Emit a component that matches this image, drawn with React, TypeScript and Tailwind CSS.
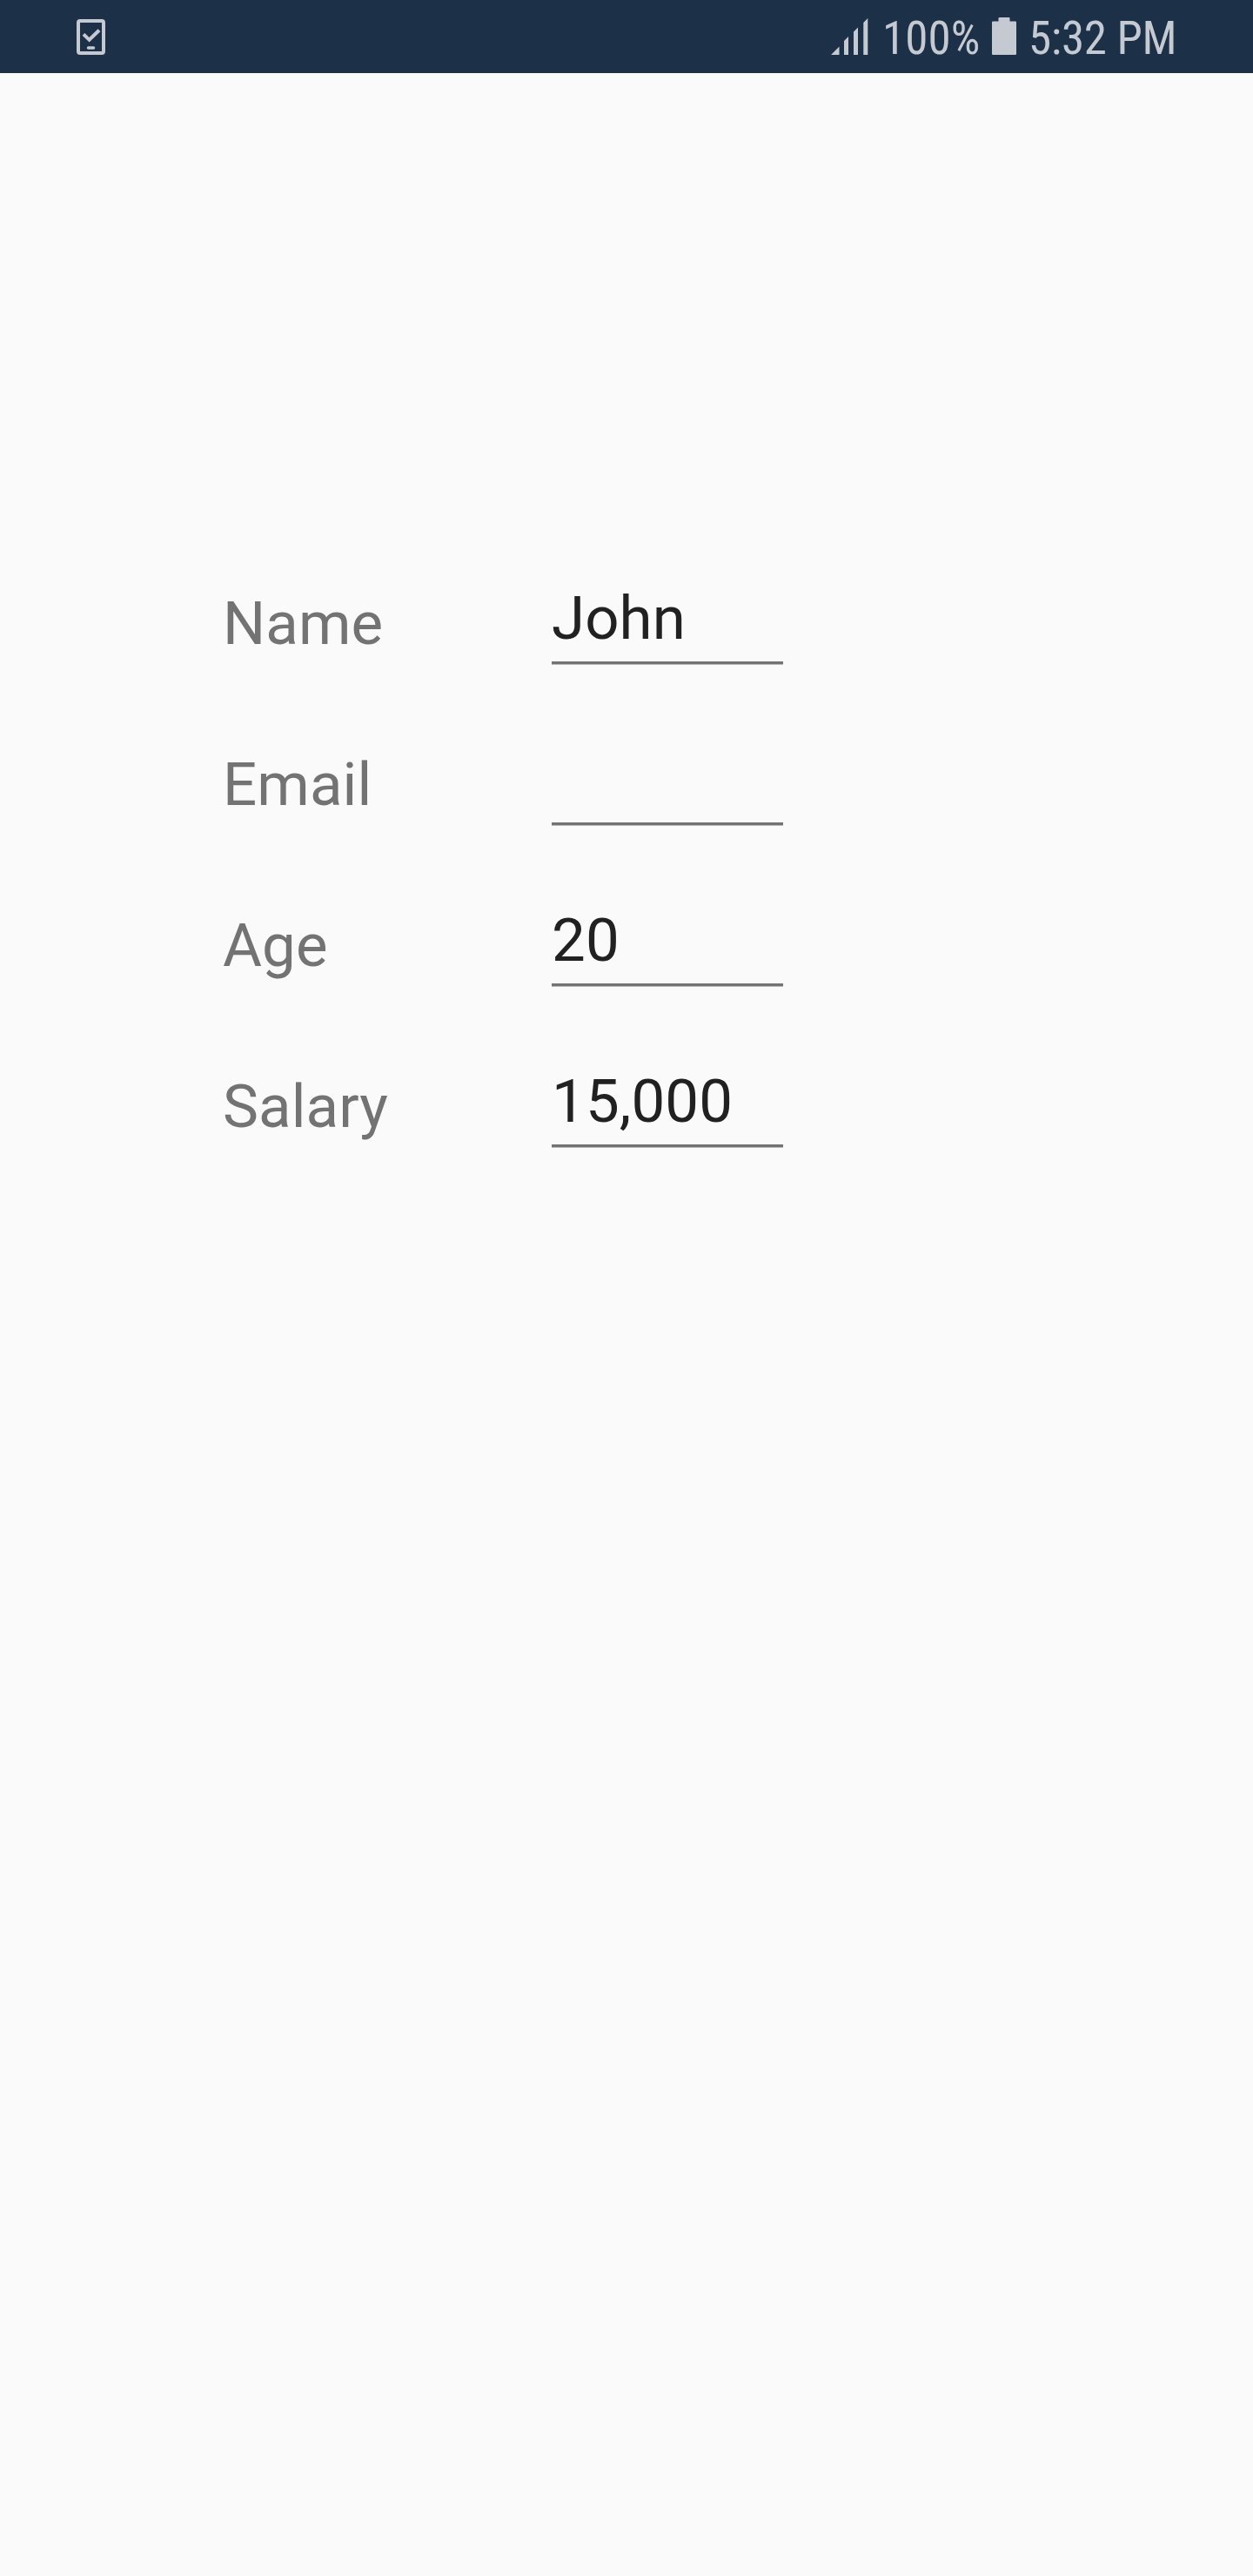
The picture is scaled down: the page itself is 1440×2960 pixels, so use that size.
function Row({ label, value }: { label: string; value: string }) {
  return (
    <div className="flex h-[185px]">
      <div className="w-[378px] pt-4 text-[69px] leading-[82px] tracking-[0.1px] text-[#737373]">{label}</div>
      <div className="h-[103px] w-[266px] border-b-[3px] border-[#737373] pt-2.5 text-[69px] leading-[82px] tracking-[0.1px] text-[#212121] shadow-[0_1px_0_#b8b8b8]">
        {value}
      </div>
    </div>
  );
}

function StatusBar() {
  return (
    <header className="flex h-[84px] items-start bg-[#1c3148] pl-[88px] pt-5 text-[#c5cad2]">
      <svg className="mt-0.5 h-[42px] w-[33px]" viewBox="0 0 33 42" fill="none" stroke="currentColor" strokeWidth="4">
        <rect x="2" y="2" width="29" height="37" rx="2" />
        <path d="M8 17.3l6.600 6.500L26 12.800" />
        <path d="M13.500 33h6" strokeWidth="3.500" strokeLinecap="round" />
      </svg>
      <svg className="ml-[834px] mt-px h-[42px] w-[43px]" viewBox="0 0 43 42" fill="currentColor">
        <path d="M0 42l9.500-9.500v9.500zM15 26l5-5v21h-5zM26 15.500l5-5v31.500h-5zM37.300 5l5-5v42h-5z" />
      </svg>
      <span className="-mt-[7px] ml-4 w-[111px] text-[53px] leading-[62px] tracking-[0.1px] [font-stretch:75%]">100%</span>
      <svg className="ml-[15px] h-[43px] w-7" viewBox="0 0 28 43" fill="currentColor">
        <path d="M8.500 0h11a1 1 0 0 1 1 1v3.500H27a1 1 0 0 1 1 1V42a1 1 0 0 1-1 1H1a1 1 0 0 1-1-1V5.500a1 1 0 0 1 1-1h6.500V1a1 1 0 0 1 1-1z" />
      </svg>
      <span className="-mt-[7px] ml-3.5 whitespace-nowrap text-[53px] leading-[62px] tracking-[-0.3px] [font-stretch:75%]">5:32 PM</span>
    </header>
  );
}

export default function App() {
  return (
    <div className="h-[2960px] w-[1440px] bg-[#fafafa] font-['Roboto',sans-serif]">
      <StatusBar />
      <main className="pl-[256px] pt-[576px]">
        <Row label="Name" value="John" />
        <Row label="Email" value="" />
        <Row label="Age" value="20" />
        <Row label="Salary" value="15,000" />
      </main>
    </div>
  );
}
